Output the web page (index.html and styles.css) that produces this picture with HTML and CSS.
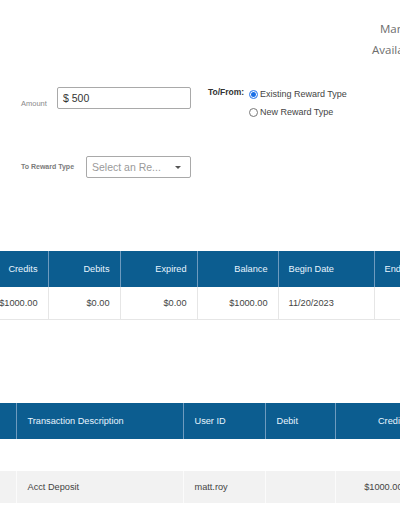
FILE: index.html
```html
<!DOCTYPE html>
<html>
<head>
<meta charset="utf-8">
<link rel="stylesheet" href="styles.css">
</head>
<body>
<div class="page">
  <div class="summary">
    <div class="sum-line first">Manual Adjustment</div>
    <div class="sum-line">Available Balance</div>
  </div>

  <div class="form">
    <div class="row row-amount">
      <div class="field">
        <span class="lbl lbl-amount">Amount</span>
        <div class="input">$ 500</div>
      </div>
      <div class="tofrom">
        <span class="tofrom-lbl">To/From:</span>
        <div class="radios">
          <label class="radio"><span class="dot checked"></span>Existing Reward Type</label>
          <label class="radio"><span class="dot"></span>New Reward Type</label>
        </div>
      </div>
    </div>
    <div class="row row-select">
      <span class="lbl lbl-type">To Reward Type</span>
      <div class="select"><span class="placeholder">Select an Re...</span><span class="caret"></span></div>
    </div>
  </div>

  <div class="tbl-wrap t1">
    <table class="grid grid1">
      <colgroup>
        <col style="width:88px"><col style="width:72px"><col style="width:77px"><col style="width:81px"><col style="width:96px"><col style="width:96px">
      </colgroup>
      <thead>
        <tr><th class="r">Credits</th><th class="r">Debits</th><th class="r">Expired</th><th class="r">Balance</th><th>Begin Date</th><th>End Date</th></tr>
      </thead>
      <tbody>
        <tr class="white"><td class="r">$1000.00</td><td class="r">$0.00</td><td class="r">$0.00</td><td class="r">$1000.00</td><td>11/20/2023</td><td></td></tr>
      </tbody>
    </table>
  </div>

  <div class="tbl-wrap t2">
    <table class="grid grid2">
      <colgroup>
        <col style="width:96px"><col style="width:167px"><col style="width:82px"><col style="width:70px"><col style="width:79px"><col style="width:90px">
      </colgroup>
      <thead>
        <tr><th></th><th>Transaction Description</th><th>User ID</th><th>Debit</th><th class="r">Credit</th><th></th></tr>
      </thead>
      <tbody>
        <tr class="empty"><td></td><td></td><td></td><td></td><td></td><td></td></tr>
        <tr class="gray"><td></td><td>Acct Deposit</td><td>matt.roy</td><td></td><td class="r">$1000.00</td><td></td></tr>
      </tbody>
    </table>
  </div>
</div>
</body>
</html>
```

FILE: styles.css
```css
html, body {
  margin: 0;
  padding: 0;
  background: #fff;
  overflow: hidden;
}
body {
  width: 400px;
  height: 516px;
  font-family: "Liberation Sans", Arial, sans-serif;
  color: #333;
}
.page {
  width: 400px;
  overflow: hidden;
}
.summary {
  padding-top: 18px;
  margin-left: 372px;
  white-space: nowrap;
  font-family: "Open Sans", "Liberation Sans", sans-serif;
  font-size: 11.5px;
  line-height: 21px;
  color: #6d6d6d;
}
.sum-line.first {
  padding-left: 8px;
}
.form {
  margin-top: 25px;
  padding-left: 21px;
}
.row {
  display: flex;
}
.row-amount {
  align-items: flex-start;
}
.field {
  display: flex;
  align-items: flex-end;
  margin-top: 2px;
}
.lbl {
  font-size: 7.5px;
  line-height: 10px;
  color: #8a8a8a;
  white-space: nowrap;
}
.lbl-amount {
  width: 36px;
}
.lbl-type {
  width: 65px;
  color: #7a7a7a;
  font-weight: bold;
  font-size: 7px;
}
.input {
  box-sizing: border-box;
  width: 134px;
  height: 22px;
  border: 1px solid #a9a9a9;
  border-radius: 2px;
  padding-left: 5px;
  font-size: 10.5px;
  line-height: 20px;
  color: #333;
}
.tofrom {
  display: flex;
  align-items: flex-start;
  margin-left: 17px;
}
.tofrom-lbl {
  width: 40px;
  font-weight: bold;
  font-size: 8.5px;
  line-height: 14px;
  color: #333;
  white-space: nowrap;
}
.radios {
  display: flex;
  flex-direction: column;
}
.radio {
  display: flex;
  align-items: center;
  height: 18px;
  font-size: 9px;
  color: #444;
  white-space: nowrap;
}
.dot {
  box-sizing: border-box;
  width: 9px;
  height: 9px;
  border-radius: 50%;
  border: 1px solid #777;
  background: #fff;
  margin-left: 1px;
  margin-right: 2px;
}
.dot.checked {
  border-color: #4f8ff0;
  background: #1a6fe6;
  box-shadow: inset 0 0 0 1px #fff;
}
.row-select {
  margin-top: 35px;
  align-items: center;
}
.select {
  box-sizing: border-box;
  width: 105px;
  height: 22px;
  border: 1px solid #a9a9a9;
  border-radius: 2px;
  padding-left: 5px;
  padding-right: 9px;
  display: flex;
  align-items: center;
  justify-content: space-between;
}
.placeholder {
  font-size: 10.5px;
  color: #9a9a9a;
  white-space: nowrap;
}
.caret {
  width: 0;
  height: 0;
  border-left: 3px solid transparent;
  border-right: 3px solid transparent;
  border-top: 3px solid #555;
}
.tbl-wrap {
  overflow: hidden;
  width: 400px;
}
.t1 {
  margin-top: 73px;
}
.t2 {
  margin-top: 83px;
}
.grid {
  border-collapse: collapse;
  table-layout: fixed;
  font-size: 9.2px;
}
.grid1 {
  width: 510px;
  margin-left: -40px;
}
.grid2 {
  width: 584px;
  margin-left: -80px;
}
.grid th {
  background: #0c5d90;
  color: #e8f5ff;
  font-weight: normal;
  height: 36px;
  padding: 0 10px;
  text-align: left;
  border-right: 1px solid #6e9bbf;
  white-space: nowrap;
}
.grid td {
  height: 32px;
  padding: 0 10px;
  text-align: left;
  color: #444;
  white-space: nowrap;
}
.grid .r {
  text-align: right;
}
.grid tr.white td {
  height: 32px;
  border-right: 1px solid #e6e6e6;
  border-bottom: 1px solid #e6e6e6;
}
.grid2 th {
  padding: 0 11px;
}
.grid2 td {
  padding: 0 11px;
}
.grid tr.empty td {
  height: 32px;
}
.grid tr.gray td {
  height: 32px;
  background: #f2f2f2;
  border-right: 1px solid #fbfbfb;
}
```
